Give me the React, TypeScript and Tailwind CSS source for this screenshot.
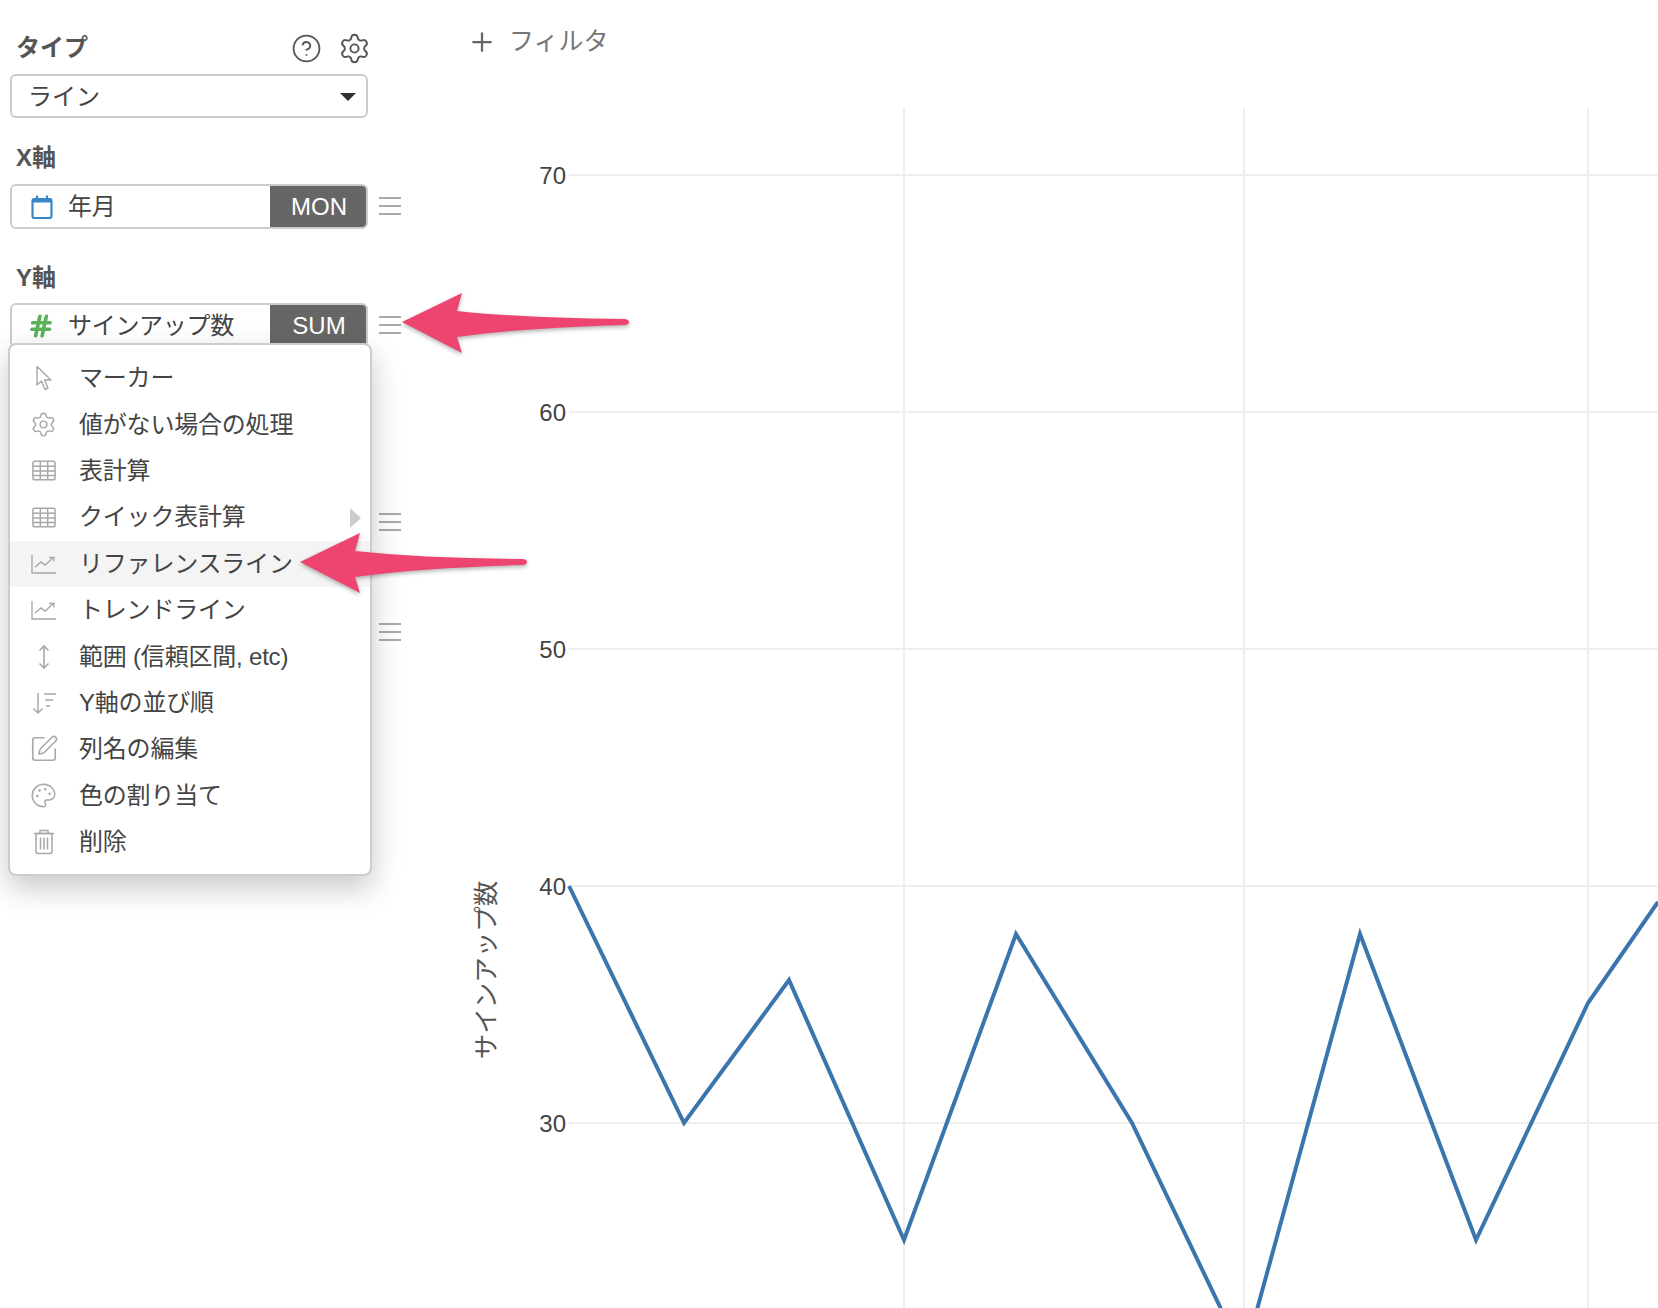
import {
  CircleHelp,
  Hash,
  Palette,
  Plus,
  Settings,
  SquarePen,
} from "lucide-react";

const CursorIcon = () => (
  <svg width="18" height="26" viewBox="0 0 18 26" fill="none" stroke="#a8a8a8" strokeWidth="1.4" strokeLinejoin="round">
    <path d="M2 1.500V20l4.500-4L10 24.500l3-1.500-3.500-8H16Z" />
  </svg>
);

const CalendarIcon = () => (
  <svg width="24" height="26" viewBox="0 0 24 26" fill="none" stroke="#3a87c8" strokeWidth="2.2">
    <rect x="2.500" y="5" width="19" height="19" rx="2" />
    <path d="M2.500 6.500h19" strokeWidth="4" />
    <path d="M7 1.500v4M17 1.500v4" />
  </svg>
);

const GridIcon = () => (
  <svg width="24" height="21" viewBox="0 0 26 22" fill="none" stroke="#a8a8a8" strokeWidth="1.6">
    <rect x="1" y="1" width="24" height="20" rx="2" />
    <path d="M1 6.500h24M1 11.500h24M1 16.500h24M9 1v20M17 1v20" />
  </svg>
);

const TrendIcon = () => (
  <svg width="26" height="22" viewBox="0 0 26 22" fill="none" stroke="#a8a8a8" strokeWidth="1.4">
    <path d="M1 2v18h24" />
    <path d="M4 14l6-5 4 3 8-7" />
    <path d="M18 4.500h5v4" />
  </svg>
);

const RangeIcon = () => (
  <svg width="14" height="26" viewBox="0 0 14 26" fill="none" stroke="#a8a8a8" strokeWidth="1.6">
    <path d="M7 2v22M2.500 6.500L7 2l4.500 4.500M2.500 19.500L7 24l4.500-4.500" />
  </svg>
);

const SortIcon = () => (
  <svg width="26" height="24" viewBox="0 0 26 24" fill="none" stroke="#a8a8a8" strokeWidth="1.5">
    <path d="M7 2v20M2.500 17.500L7 22l4.500-4.500" />
    <path d="M13 3h12M14 9h8M15 15h4" />
  </svg>
);

const TrashIcon = () => (
  <svg width="22" height="26" viewBox="0 0 22 26" fill="none" stroke="#a8a8a8" strokeWidth="1.5">
    <path d="M1 4.500h20M7 4.500V1.500h8v3" />
    <rect x="3" y="4.500" width="16" height="20" rx="2" />
    <path d="M7.500 8.500v12M11 8.500v12M14.500 8.500v12" />
  </svg>
);

const DragHandle = () => (
  <svg width="22" height="20" viewBox="0 0 22 20" stroke="#aaaaaa" strokeWidth="2">
    <path d="M0 2h22M0 10h22M0 18h22" />
  </svg>
);

const PinkArrow = () => (
  <svg width="232" height="66" viewBox="0 0 232 66" className="drop-shadow-[0_2px_2px_rgba(0,0,0,0.3)]">
    <path
      d="M2 31L62 2L57 20Q120 27 225 28Q229 28.500 229 31Q229 33.500 225 34Q120 37 57 46L62 62Z"
      fill="#ee4570"
    />
  </svg>
);

const menuItems = [
  { label: "マーカー", icon: <CursorIcon /> },
  { label: "値がない場合の処理", icon: <Settings size={27} strokeWidth={1.3} color="#a8a8a8" /> },
  { label: "表計算", icon: <GridIcon /> },
  { label: "クイック表計算", icon: <GridIcon />, submenu: true },
  { label: "リファレンスライン", icon: <TrendIcon />, active: true },
  { label: "トレンドライン", icon: <TrendIcon /> },
  { label: "範囲 (信頼区間, etc)", icon: <RangeIcon /> },
  { label: "Y軸の並び順", icon: <SortIcon /> },
  { label: "列名の編集", icon: <SquarePen size={30} strokeWidth={1.3} color="#a8a8a8" /> },
  { label: "色の割り当て", icon: <Palette size={27} strokeWidth={1.3} color="#a8a8a8" /> },
  { label: "削除", icon: <TrashIcon /> },
];

const ticks = [
  { label: "70", y: 175 },
  { label: "60", y: 412 },
  { label: "50", y: 649 },
  { label: "40", y: 886 },
  { label: "30", y: 1123 },
];

const Field = ({ icon, name, agg }: { icon: any; name: string; agg: string }) => {
  return (
    <div className="flex items-center">
      <div className="flex h-[45px] w-[358px] overflow-hidden rounded-md border-2 border-[#cccccc]">
        <div className="flex flex-1 items-center bg-white">
          <div className="flex w-[56px] justify-center pl-[4px]">{icon}</div>
          <span className="pt-[1px] text-[24px] tracking-[-0.3px] text-[#444444]">{name}</span>
        </div>
        <div className="-my-[2px] -mr-[2px] flex w-[98px] items-center justify-center bg-[#666666] pt-[1px] text-[24px] text-white">
          {agg}
        </div>
      </div>
      <div className="-mt-[2px] ml-[11px]">
        <DragHandle />
      </div>
    </div>
  );
};

const Sidebar = () => {
  return (
    <div className="relative w-[420px] shrink-0 pl-[10px] pt-[31px]">
      <div className="flex h-[34px] w-[358px] items-center">
        <span className="pl-[6px] text-[24px] font-bold text-[#555555]">タイプ</span>
        <div className="-mr-[3px] ml-auto flex items-center gap-[16px]">
          <CircleHelp size={31} strokeWidth={1.4} color="#555555" />
          <Settings size={33} strokeWidth={1.4} color="#555555" />
        </div>
      </div>
      <div className="mt-[9px] flex h-[44px] w-[358px] items-center rounded-md border-2 border-[#cccccc] pl-[16px] pr-[10px] pt-[1px] text-[24px] text-[#444444]">
        ライン
        <span className="ml-auto h-0 w-0 border-x-[8px] border-t-[8px] border-x-transparent border-t-[#333333]" />
      </div>

      <div className="mt-[23px] mb-[9px] flex h-[34px] items-center pl-[6px] text-[24px] font-bold text-[#555555]">X軸</div>
      <Field icon={<CalendarIcon />} name="年月" agg="MON" />

      <div className="mt-[32px] mb-[8px] flex h-[34px] items-center pl-[6px] text-[24px] font-bold text-[#555555]">Y軸</div>
      <Field icon={<Hash size={26} strokeWidth={3.4} color="#5cb05c" className="-ml-[2px] -skew-x-6" />} name="サインアップ数" agg="SUM" />

      <div className="mt-[152px] flex h-[44px] w-[391px] items-center justify-end">
        <DragHandle />
      </div>
      <div className="mt-[66px] flex h-[44px] w-[391px] items-center justify-end">
        <DragHandle />
      </div>

      <div className="absolute left-[8px] top-[343px] w-[364px] rounded-lg border-2 border-[#cccccc] bg-white pb-[9px] pt-[10px] shadow-[0_12px_30px_rgba(0,0,0,0.22)]">
        {menuItems.map((item) => {
          return (
            <div
              key={item.label}
              className={
                item.active
                  ? "relative flex h-[46.4px] items-center bg-[#f4f4f4]"
                  : "relative flex h-[46.4px] items-center"
              }
            >
              <div className="flex w-[69px] justify-center pr-[2px]">{item.icon}</div>
              <span className="text-[24px] tracking-[-0.2px] text-[#444444]">{item.label}</span>
              {item.submenu && (
                <span className="absolute right-[9px] top-[14px] h-0 w-0 border-y-[10px] border-l-[11px] border-y-transparent border-l-[#cccccc]" />
              )}
            </div>
          );
        })}
      </div>
    </div>
  );
};

const Chart = () => {
  return (
    <svg viewBox="420 82 1238 1226" className="h-[1226px] w-[1238px]">
      {[904, 1244, 1588].map((x) => (
        <line key={x} x1={x} y1={108} x2={x} y2={1308} stroke="#eeeeee" strokeWidth="2" />
      ))}
      {ticks.map((t) => (
        <g key={t.label}>
          <line x1={569} y1={t.y} x2={1658} y2={t.y} stroke="#eeeeee" strokeWidth="2" />
          <text x={566} y={t.y + 9} textAnchor="end" fontSize="24" fill="#444444">
            {t.label}
          </text>
        </g>
      ))}
      <text
        x={0}
        y={0}
        transform="translate(495 970) rotate(-90)"
        textAnchor="middle"
        fontSize="25.500"
        fill="#555555"
      >
        サインアップ数
      </text>
      <polyline
        points="569,886 684,1123 789,980 904,1240 1016,934 1132,1123 1244,1357 1360,934 1476,1240 1588,1003 1658,902"
        fill="none"
        stroke="#3a75ae"
        strokeWidth="4"
      />
    </svg>
  );
};

export default function App() {
  return (
    <div className="relative flex h-[1308px] w-[1658px] overflow-hidden bg-white [font-family:'Liberation_Sans','Noto_Sans_CJK_JP',sans-serif]">
      <Sidebar />
      <div className="flex-1">
        <div className="flex h-[82px] items-center pl-[47px] pt-[2px] text-[25px] text-[#777777]">
          <Plus size={30} strokeWidth={1.8} color="#666666" />
          <span className="ml-[12px]">フィルタ</span>
        </div>
        <Chart />
      </div>
      <div className="absolute left-[400px] top-[291px]">
        <PinkArrow />
      </div>
      <div className="absolute left-[298px] top-[531px]">
        <PinkArrow />
      </div>
    </div>
  );
}
